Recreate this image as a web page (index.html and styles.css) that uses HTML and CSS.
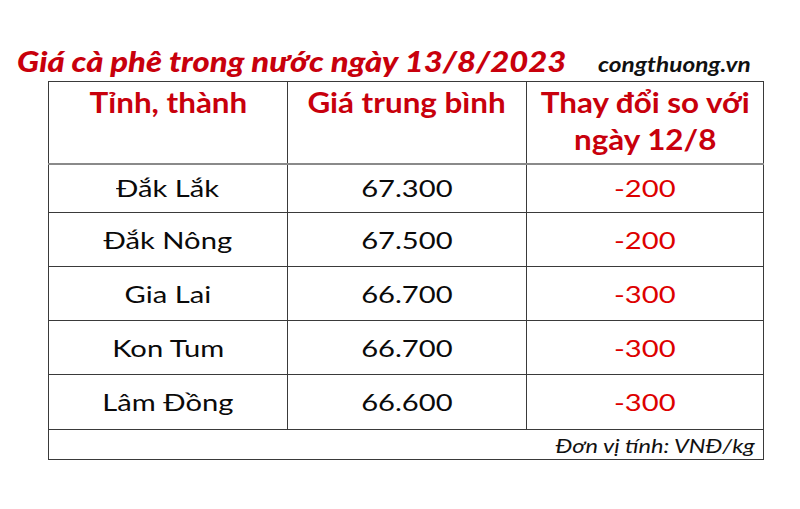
FILE: index.html
```html
<!DOCTYPE html>
<html lang="vi">
<head>
<meta charset="utf-8">
<link rel="stylesheet" href="styles.css">
</head>
<body>
<div class="page">
  <div class="title-row">
    <span class="title">Giá cà phê trong nước ngày 13/8/2023</span>
    <span class="site">congthuong.vn</span>
  </div>
  <table class="prices">
    <colgroup><col class="c1"><col class="c2"><col class="c3"></colgroup>
    <thead>
      <tr class="head">
        <th><span class="hx">Tỉnh, thành</span></th>
        <th><span class="hx">Giá trung bình</span></th>
        <th><span class="hx">Thay đổi so với<br>ngày 12/8</span></th>
      </tr>
    </thead>
    <tbody>
      <tr class="r1"><td><span class="sx">Đắk Lắk</span></td><td><span class="sx">67.300</span></td><td class="neg"><span class="sx">-200</span></td></tr>
      <tr><td><span class="sx">Đắk Nông</span></td><td><span class="sx">67.500</span></td><td class="neg"><span class="sx">-200</span></td></tr>
      <tr><td><span class="sx">Gia Lai</span></td><td><span class="sx">66.700</span></td><td class="neg"><span class="sx">-300</span></td></tr>
      <tr><td><span class="sx">Kon Tum</span></td><td><span class="sx">66.700</span></td><td class="neg"><span class="sx">-300</span></td></tr>
      <tr class="r5"><td><span class="sx">Lâm Đồng</span></td><td><span class="sx">66.600</span></td><td class="neg"><span class="sx">-300</span></td></tr>
      <tr class="foot"><td colspan="3"><span class="fx">Đơn vị tính: VNĐ/kg</span></td></tr>
    </tbody>
  </table>
</div>
</body>
</html>
```

FILE: styles.css
```css
html, body {
  margin: 0;
  padding: 0;
  background: #ffffff;
}

body {
  font-family: Lato, "Open Sans", "Liberation Sans", sans-serif;
  width: 800px;
  height: 509px;
  overflow: hidden;
}

.page {
  width: 800px;
}

.title-row {
  height: 81px;
  box-sizing: border-box;
  padding-top: 46px;
  padding-left: 17px;
  display: flex;
  align-items: baseline;
  white-space: nowrap;
}

.title {
  display: inline-block;
  width: 480px;
  font-size: 29px;
  line-height: 29px;
  font-weight: 900;
  font-style: italic;
  color: #c8000c;
  transform: scaleX(1.13);
  transform-origin: left center;
}

.site {
  display: inline-block;
  margin-left: 101px;
  font-size: 20px;
  line-height: 29px;
  font-weight: 700;
  font-style: italic;
  color: #111111;
  transform: scaleX(1.22);
  transform-origin: left center;
}

.prices {
  margin-left: 48px;
  width: 715px;
  table-layout: fixed;
  border-collapse: collapse;
}

.c1 { width: 239px; }
.c2 { width: 239px; }
.c3 { width: 237px; }

.prices th,
.prices td {
  border: 1px solid #3a3a3a;
  padding: 0;
  text-align: center;
}

.head th {
  height: 82px;
  vertical-align: top;
  padding-top: 2px;
  box-sizing: border-box;
  font-size: 28px;
  line-height: 37px;
  font-weight: 700;
  color: #c8000c;
  border-bottom: 2px solid #8a8a8a;
}

.hx {
  display: inline-block;
  transform: scaleX(1.12);
}

.prices tbody td {
  height: 54px;
  box-sizing: border-box;
  vertical-align: middle;
  font-size: 23.5px;
  line-height: 30px;
  color: #0a0a0a;
}

.prices tbody tr.r1 td { height: 49px; }
.prices tbody tr.r5 td { height: 55px; }

.prices tbody td.neg {
  color: #dd0000;
}

.sx {
  display: inline-block;
  transform: scaleX(1.24);
}

.prices tbody tr.foot td {
  height: 30px;
  text-align: right;
  padding-right: 8px;
  font-size: 19px;
  line-height: 24px;
  font-style: italic;
  color: #111111;
  vertical-align: bottom;
  padding-bottom: 1px;
}

.fx {
  display: inline-block;
  transform: scaleX(1.24);
  transform-origin: right center;
}
```
